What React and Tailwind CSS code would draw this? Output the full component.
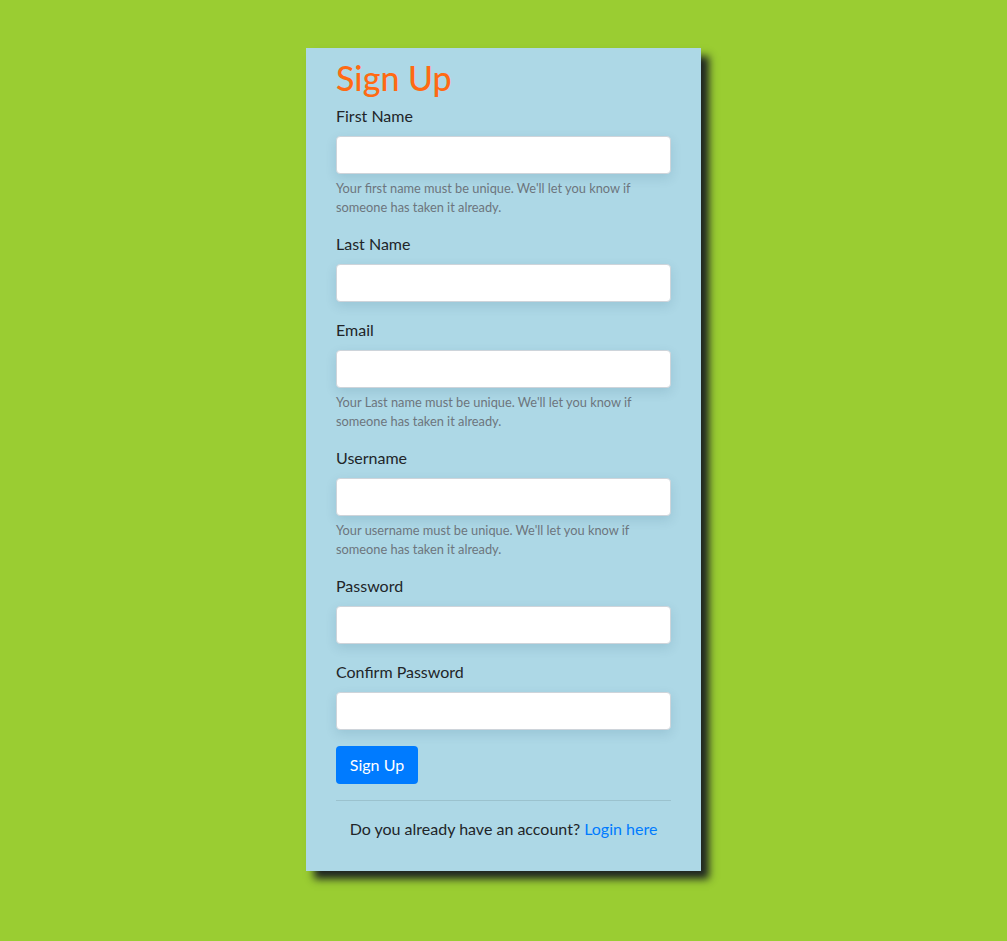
import React from 'react';

const fields = [
  { label: 'First Name', type: 'text', help: "Your first name must be unique. We'll let you know if someone has taken it already." },
  { label: 'Last Name', type: 'text' },
  { label: 'Email', type: 'email', help: "Your Last name must be unique. We'll let you know if someone has taken it already." },
  { label: 'Username', type: 'text', help: "Your username must be unique. We'll let you know if someone has taken it already." },
  { label: 'Password', type: 'password' },
  { label: 'Confirm Password', type: 'password' },
];

const App = () => {
  return (
    <div className="min-h-[941px] bg-[#9acd32] pt-12 pb-[71px] font-['Lato','Liberation_Sans',sans-serif] text-[#212529]">
      <div className="mx-auto w-[395px] bg-[#add8e6] px-[30px] pt-3 pb-[30px] shadow-[8px_8px_8px_#1f2622]">
        <h2 className="mb-2 text-[34px] leading-[36px] font-medium text-[#ff6a13]">Sign Up</h2>
        <form onSubmit={(e) => e.preventDefault()}>
          {fields.map((f) => (
            <div key={f.label} className="mb-4">
              <label className="mb-2 block text-base leading-6">{f.label}</label>
              <input
                type={f.type}
                className="block h-[38px] w-full rounded border border-[#ced4da] bg-white px-3 text-base shadow-[0_4px_12px_rgba(0,60,90,0.12)] outline-none"
              />
              {f.help && (
                <small className="mt-[5px] -mb-px block text-[12.8px] leading-[19px] text-[#6c757d]">{f.help}</small>
              )}
            </div>
          ))}
          <button type="submit" className="h-[38px] w-[82px] rounded bg-[#007bff] text-base text-white">
            Sign Up
          </button>
        </form>
        <hr className="my-4 border-0 border-t border-[rgba(0,0,0,0.1)]" />
        <p className="text-center text-base leading-6">
          Do you already have an account? <a href="#" className="text-[#007bff]">Login here</a>
        </p>
      </div>
    </div>
  );
};

export default App;
